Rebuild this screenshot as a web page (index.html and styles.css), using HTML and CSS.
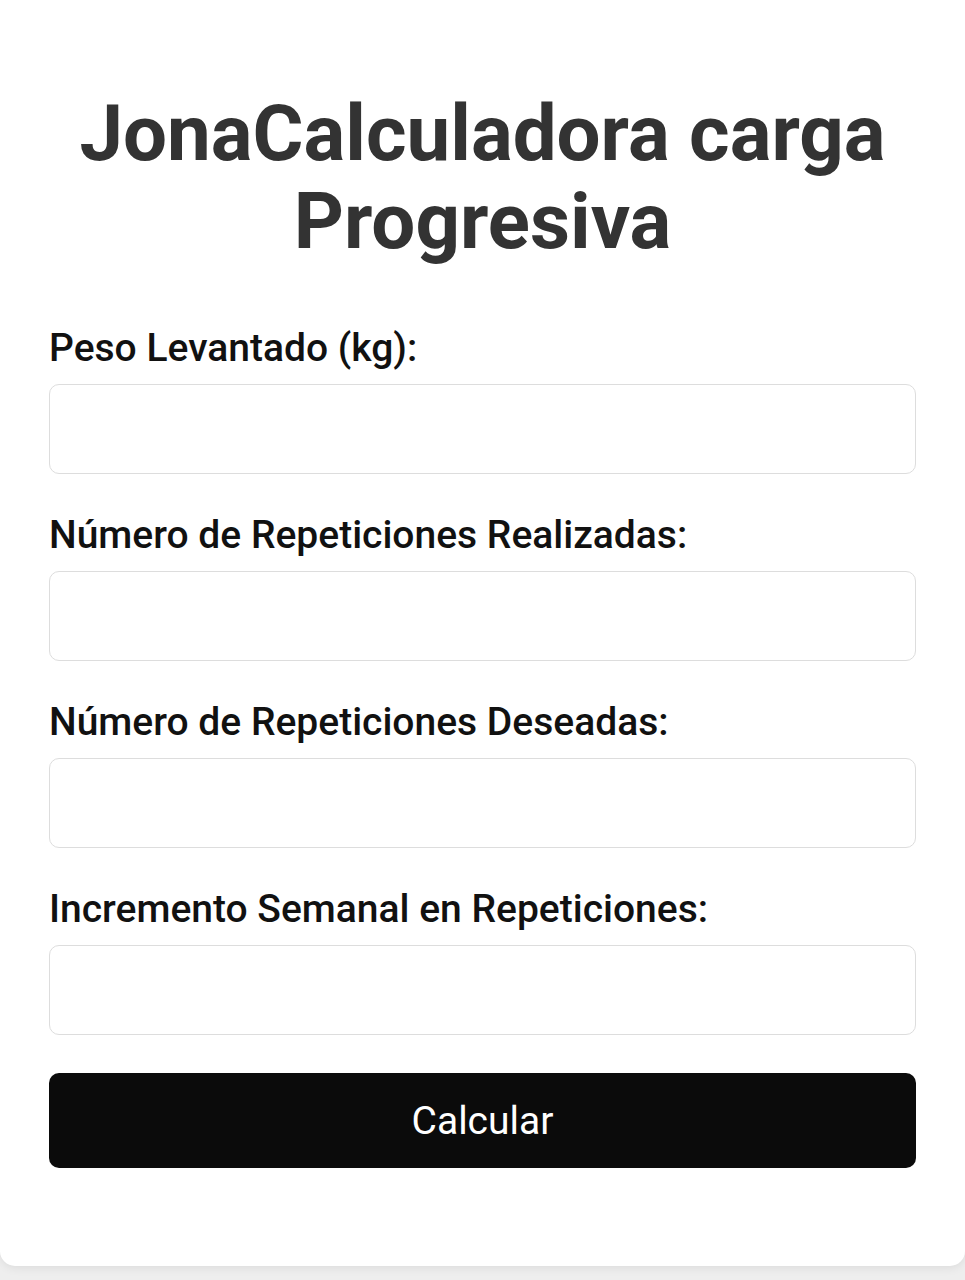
FILE: index.html
```html
<!DOCTYPE html>
<html lang="es">
<head>
<meta charset="utf-8">
<title>JonaCalculadora carga Progresiva</title>
<link rel="stylesheet" href="styles.css">
</head>
<body>
<div class="card">
  <h1 class="title">JonaCalculadora carga Progresiva</h1>
  <form class="form">
    <div class="field">
      <label class="label" for="peso">Peso Levantado (kg):</label>
      <input class="input" id="peso" type="number">
    </div>
    <div class="field">
      <label class="label" for="reps">Número de Repeticiones Realizadas:</label>
      <input class="input" id="reps" type="number">
    </div>
    <div class="field">
      <label class="label" for="deseadas">Número de Repeticiones Deseadas:</label>
      <input class="input" id="deseadas" type="number">
    </div>
    <div class="field">
      <label class="label" for="inc">Incremento Semanal en Repeticiones:</label>
      <input class="input" id="inc" type="number">
    </div>
    <button class="button" type="button">Calcular</button>
  </form>
</div>
</body>
</html>
```
FILE: styles.css
```css
html, body {
  margin: 0;
  padding: 0;
}
body {
  background: #eeeeee;
  font-family: Roboto, "Liberation Sans", Arial, sans-serif;
  min-height: 1280px;
}
.card {
  background: #ffffff;
  border-radius: 0 0 15px 15px;
  box-shadow: 0 2px 10px rgba(0, 0, 0, 0.08);
  padding: 90px 49px 98px;
  box-sizing: border-box;
}
.title {
  margin: 0;
  text-align: center;
  font-size: 78px;
  line-height: 88px;
  font-weight: 700;
  color: #333333;
}
.form {
  display: flex;
  flex-direction: column;
  gap: 40px;
  margin-top: 61px;
}
.field {
  display: flex;
  flex-direction: column;
  gap: 15px;
}
.label {
  display: block;
  font-size: 39px;
  line-height: 42px;
  font-weight: 500;
  color: #111111;
}
.input {
  box-sizing: border-box;
  width: 100%;
  height: 90px;
  border: 1.5px solid #dddddd;
  border-radius: 10px;
  background: #ffffff;
  font: inherit;
  font-size: 35px;
  padding: 0 20px;
  outline: none;
}
.button {
  margin-top: -2px;
  box-sizing: border-box;
  width: 100%;
  height: 95px;
  border: none;
  border-radius: 10px;
  background: #0b0b0b;
  color: #ffffff;
  font-family: Roboto, "Liberation Sans", Arial, sans-serif;
  font-size: 39px;
  font-weight: 400;
  cursor: pointer;
}
```
